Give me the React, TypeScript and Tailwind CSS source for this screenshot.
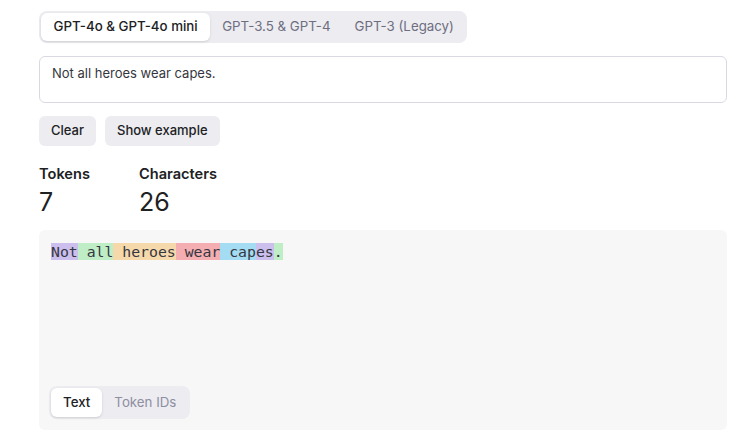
import React from "react";

const tokens = [
  { t: "Not", c: "bg-[rgba(107,64,216,0.3)]" },
  { t: " all", c: "bg-[rgba(104,222,122,0.4)]" },
  { t: " heroes", c: "bg-[rgba(244,172,54,0.4)]" },
  { t: " wear", c: "bg-[rgba(239,65,70,0.4)]" },
  { t: " cap", c: "bg-[rgba(39,181,234,0.4)]" },
  { t: "es", c: "bg-[rgba(107,64,216,0.3)]" },
  { t: ".", c: "bg-[rgba(104,222,122,0.4)]" },
];

const App = () => {
  return (
    <div className="min-h-screen bg-white pl-[39px] pr-[15px] pt-[11px] font-['Inter',sans-serif] text-[#202123]">
      {/* model tabs */}
      <div className="inline-flex h-[32px] items-center rounded-lg bg-[#ececf1] p-[2px] text-[13.3px]">
        <button className="h-7 rounded-md bg-white px-[12.5px] font-medium text-[#202123] shadow-sm">
          GPT-4o &amp; GPT-4o mini
        </button>
        <button className="h-7 px-3 text-[#6e6e80]">GPT-3.5 &amp; GPT-4</button>
        <button className="h-7 pl-3 pr-[11px] text-[#6e6e80]">GPT-3 (Legacy)</button>
      </div>

      <div className="mt-[13px] h-[47px] rounded-md border border-[#d9d9e3] px-3 py-[7px] text-[13px] text-[#353740]">
        Not all heroes wear capes.
      </div>

      <div className="mt-[13px] flex gap-[9px] text-[13px] font-medium">
        <button className="h-[30px] rounded-md bg-[#ececf1] px-3">Clear</button>
        <button className="h-[30px] rounded-md bg-[#ececf1] px-3">Show example</button>
      </div>

      <div className="mt-[18px] flex">
        <div className="w-[100px]">
          <div className="text-[14.6px] font-semibold leading-[20px]">Tokens</div>
          <div className="text-[25px] leading-[36px]">7</div>
        </div>
        <div>
          <div className="text-[14.6px] font-semibold leading-[20px]">Characters</div>
          <div className="text-[25px] leading-[36px]">26</div>
        </div>
      </div>

      <div className="mt-[10px] flex h-[200px] flex-col justify-between rounded-md bg-[#f7f7f8] pb-[11px] pl-3 pr-3 pt-[13px]">
        <pre className="font-['DejaVu_Sans_Mono',monospace] text-[14.8px] leading-[18px] text-[#353740]">
          {tokens.map((k, i) => (
            <span key={i} className={k.c}>
              {k.t}
            </span>
          ))}
        </pre>
        <div className="-ml-[2px] inline-flex h-[33px] w-fit items-center rounded-lg bg-[#ececf1] p-[2px] text-[13.3px]">
          <button className="h-[29px] rounded-md bg-white px-3 font-medium shadow-sm">Text</button>
          <button className="h-[29px] px-3 text-[#8e8ea0]">Token IDs</button>
        </div>
      </div>
    </div>
  );
};

export default App;
